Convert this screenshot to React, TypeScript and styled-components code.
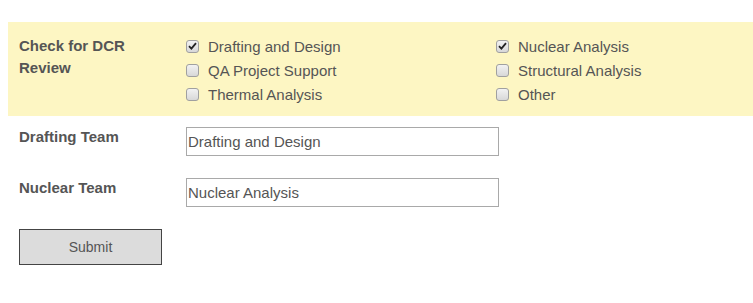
import React, { FC, useState } from 'react';
import styled, { createGlobalStyle } from 'styled-components';

const GlobalStyle = createGlobalStyle`
  body {
    margin: 8px 0 8px 8px;
    font-family: "Liberation Sans", Arial, sans-serif;
    color: #555;
    background: #fff;
  }
`;

const options = [
  { name: 'drafting', label: 'Drafting and Design', checked: true },
  { name: 'nuclear', label: 'Nuclear Analysis', checked: true },
  { name: 'qa', label: 'QA Project Support', checked: false },
  { name: 'structural', label: 'Structural Analysis', checked: false },
  { name: 'thermal', label: 'Thermal Analysis', checked: false },
  { name: 'other', label: 'Other', checked: false },
];

const Form = styled.form`
  display: flex;
  flex-direction: column;
  padding-top: 14px;
`;

const ReviewBand = styled.div`
  display: flex;
  padding: 12px 0 10px 11px;
  background-color: #fdf6c3;
`;

const FieldLabel = styled.div`
  width: 167px;
  flex-shrink: 0;
  padding-top: 1px;
  font-size: 15px;
  font-weight: 700;
  line-height: 22px;
  color: #555;
`;

const CheckGrid = styled.div`
  display: grid;
  grid-template-columns: 310px 1fr;
  grid-auto-rows: 24px;
`;

const CheckItem = styled.label`
  display: flex;
  align-items: center;
  gap: 9px;
  font-size: 15px;
  color: #555;
  cursor: pointer;
`;

const Box = styled.span`
  width: 13px;
  height: 13px;
  box-sizing: border-box;
  border: 1px solid #a0a0a0;
  border-radius: 3px;
  background: linear-gradient(#f2f2f2, #d8d8d8);
  display: flex;
  align-items: center;
  justify-content: center;
`;

const Row = styled.div<{ $gap: number }>`
  display: flex;
  align-items: flex-start;
  padding-left: 11px;
  margin-top: ${(p) => p.$gap}px;
`;

const TextInput = styled.input`
  width: 313px;
  height: 29px;
  box-sizing: border-box;
  margin: 0;
  padding: 0 1px;
  border: 1px solid #a9a9a9;
  font-family: "Liberation Sans", Arial, sans-serif;
  font-size: 15px;
  color: #555;
  outline: none;
`;

const TeamLabel = styled(FieldLabel)`
  padding-top: 0;
  line-height: 20px;
`;

const SubmitButton = styled.button`
  align-self: flex-start;
  margin: 22px 0 0 11px;
  width: 143px;
  height: 36px;
  border: 1px solid #444;
  background-color: #dcdcdc;
  font-family: "Liberation Sans", Arial, sans-serif;
  font-size: 14px;
  color: #555;
  cursor: pointer;
`;

const Check: FC<{ label: string; initial: boolean }> = ({ label, initial }) => {
  const [checked, setChecked] = useState(initial);
  return (
    <CheckItem onClick={() => setChecked(!checked)}>
      <Box>
        {checked && (
          <svg width="9" height="8" viewBox="0 0 9 8">
            <path d="M1 4.2 L3.4 6.6 L8 1.2" fill="none" stroke="#222" strokeWidth="1.8" />
          </svg>
        )}
      </Box>
      {label}
    </CheckItem>
  );
};

export default function App() {
  return (
    <>
      <GlobalStyle />
      <Form onSubmit={(e) => e.preventDefault()}>
        <ReviewBand>
          <FieldLabel>
            Check for DCR
            <br />
            Review
          </FieldLabel>
          <CheckGrid>
            {options.map((o) => (
              <Check key={o.name} label={o.label} initial={o.checked} />
            ))}
          </CheckGrid>
        </ReviewBand>
        <Row $gap={11}>
          <TeamLabel>Drafting Team</TeamLabel>
          <TextInput defaultValue="Drafting and Design" />
        </Row>
        <Row $gap={22}>
          <TeamLabel>Nuclear Team</TeamLabel>
          <TextInput defaultValue="Nuclear Analysis" />
        </Row>
        <SubmitButton type="submit">Submit</SubmitButton>
      </Form>
    </>
  );
}
